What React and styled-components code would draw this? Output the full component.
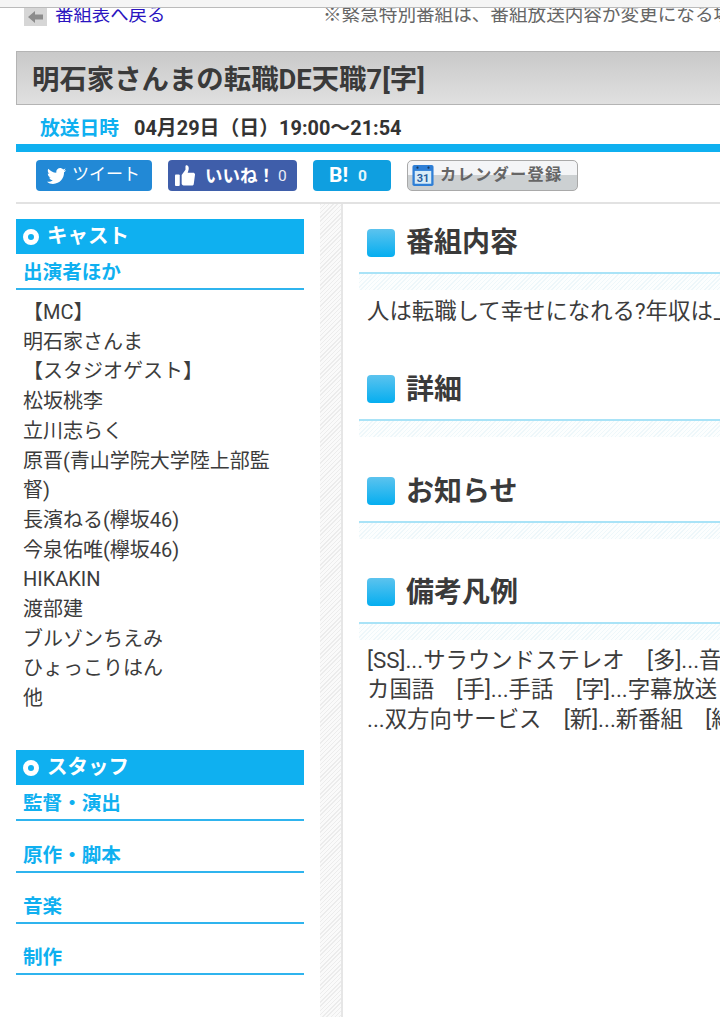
import React from "react";
import styled, { createGlobalStyle } from "styled-components";

const sky = "#0fb0f0";
const ink = "#333";

const Global = createGlobalStyle`
  html, body { margin: 0; padding: 0; background: #fff; }
  body { font-family: Roboto, "Noto Sans CJK JP", sans-serif; color: ${ink}; }
`;

const Page = styled.div`
  width: 720px;
  height: 1017px;
  overflow: hidden;
  position: relative;
`;

const Strip = styled.div`
  height: 7px;
  background: #f5f5f5;
  border-bottom: 1px solid #bbb;
  position: relative;
  z-index: 1;
`;

const NavRow = styled.div`
  display: flex;
  height: 43px;
  padding-left: 24px;
  white-space: nowrap;
  overflow: hidden;
`;

const BackIcon = styled.span`
  width: 23px;
  height: 18px;
  background: #d6d6d6;
  display: flex;
  align-items: center;
  justify-content: center;
  flex: none;
`;

const BackLink = styled.a`
  color: #2a14c0;
  font-size: 18.4px;
  line-height: 14px;
  margin-left: 8px;
  width: 268px;
  flex: none;
`;

const Notice = styled.span`
  color: #666;
  font-size: 18.6px;
  line-height: 14px;
`;

const TitleBox = styled.div`
  margin-left: 16px;
  width: 720px;
  height: 54px;
  border: 1px solid #b4b4b4;
  border-width: 1px 0 1px 1px;
  background: linear-gradient(#c9c9c9, #e0e0e0);
  display: flex;
  align-items: center;
  padding: 0 0 3px 15px;
  font-size: 27.4px;
  font-weight: 700;
  color: #3a3a3a;
  box-sizing: border-box;
`;

const DateRow = styled.div`
  display: flex;
  align-items: center;
  height: 39px;
  padding: 3px 0 0 40px;
  box-sizing: border-box;
  font-weight: 700;
`;

const DateLabel = styled.span`
  color: ${sky};
  font-size: 19.8px;
  width: 94px;
`;

const DateValue = styled.span`
  font-size: 19.9px;
`;

const BlueBar = styled.div`
  margin-left: 16px;
  height: 8px;
  background: ${sky};
`;

const Social = styled.div`
  display: flex;
  align-items: flex-start;
  height: 52px;
  margin-left: 16px;
  padding: 8px 0 0 20px;
  border-bottom: 2px solid #e2e2e2;
  box-sizing: border-box;
`;

const SocialBtn = styled.span`
  display: flex;
  align-items: center;
  height: 31px;
  width: ${p => p.$w}px;
  margin-right: 16px;
  padding-left: ${p => p.$pad}px;
  border-radius: 4px;
  background: ${p => p.$bg};
  color: #fff;
  box-sizing: border-box;
  flex: none;
`;

const BtnLabel = styled.span`
  font-weight: ${p => (p.$bold ? 700 : 400)};
  font-size: ${p => p.$size}px;
  margin-left: ${p => p.$ml || 0}px;
  padding-bottom: ${p => p.$lift || 0}px;
`;

const BtnCount = styled.span`
  font-size: 15.5px;
  font-weight: ${p => (p.$bold ? 700 : 400)};
  margin-left: ${p => p.$ml}px;
  opacity: .9;
`;

const CalendarBtn = styled.span`
  display: flex;
  align-items: center;
  width: 171px;
  height: 31px;
  padding-left: 4px;
  box-sizing: border-box;
  border: 1px solid #a9a9a9;
  border-radius: 5px;
  background: linear-gradient(#f4f5f7 0 50%, #ccd0d2 50% 100%);
  flex: none;
`;

const CalendarLabel = styled.span`
  margin-left: 6px;
  padding-bottom: 5px;
  color: #666;
  font-size: 16.3px;
  font-weight: 700;
  letter-spacing: 1.2px;
`;

const Columns = styled.div`
  display: flex;
  margin-left: 16px;
  height: 813px;
`;

const Sidebar = styled.aside`
  width: 288px;
  flex: none;
  padding-top: 15px;
`;

const Stripes = styled.div`
  width: 21px;
  flex: none;
  margin-left: 16px;
  background: repeating-linear-gradient(135deg, #ececec 0 1px, #fafafa 1px 3px);
  border-right: 2px solid #e6e6e6;
`;

const Main = styled.main`
  flex: 1;
  padding-top: 18px;
  margin-left: 16px;
  min-width: 0;
`;

const SideHead = styled.div`
  display: flex;
  align-items: center;
  height: 35px;
  background: ${sky};
  color: #fff;
  font-size: 20.5px;
  font-weight: 700;
  padding-left: 7px;
`;

const SideHeadText = styled.span`
  padding-bottom: 6px;
`;

const Ring = styled.span`
  width: 6px;
  height: 6px;
  border: 5px solid #fff;
  border-radius: 50%;
  margin-right: 8px;
  flex: none;
`;

const SideSub = styled.div`
  height: 36px;
  box-sizing: border-box;
  border-bottom: 2px solid #2fb4ee;
  color: ${sky};
  font-size: 19.6px;
  line-height: 38px;
  font-weight: 700;
  padding-left: 7px;
  margin-bottom: ${p => p.$after || 0}px;
`;

const CastList = styled.ul`
  list-style: none;
  margin: 8px 0 36.5px;
  padding: 0 30px 0 7px;
  font-size: 20px;
  line-height: 29.7px;
  color: #3c3c3c;
`;

const SectionHead = styled.div`
  display: flex;
  align-items: center;
  height: 52px;
  box-sizing: border-box;
  padding: 0 0 9px 8px;
  border-bottom: 2px solid #a9e3f7;
  font-size: 28px;
  font-weight: 700;
  color: #3a3a3a;
  width: 400px;
`;

const SectionText = styled.span`
  padding-bottom: 5px;
`;

const Square = styled.span`
  width: 28px;
  height: 28px;
  border-radius: 4px;
  background: linear-gradient(#5cc3ee, #05aef0);
  margin-right: 11px;
  flex: none;
`;

const Hatch = styled.div`
  width: 400px;
  height: 16px;
  background: repeating-linear-gradient(135deg, #eef7fa 0 1px, #fcfefe 1px 3px);
  margin-bottom: ${p => p.$after}px;
`;

const Para = styled.p`
  margin: ${p => p.$m};
  padding-left: 8px;
  width: 400px;
  font-size: 22.4px;
  line-height: 29.7px;
  white-space: nowrap;
  color: #3c3c3c;
`;

const cast = [
  "【MC】", "明石家さんま", "【スタジオゲスト】", "松坂桃李", "立川志らく",
  "原晋(青山学院大学陸上部監督)", "長濱ねる(欅坂46)", "今泉佑唯(欅坂46)", "HIKAKIN",
  "渡部建", "ブルゾンちえみ", "ひょっこりはん", "他",
];

const staff = ["監督・演出", "原作・脚本", "音楽", "制作"];

const Bird = () => (
  <svg width="19" height="16" viewBox="0 0 24 20" fill="#fff">
    <path d="M24 2.4c-.9.4-1.8.7-2.8.8 1-.6 1.8-1.6 2.2-2.7-1 .6-2 1-3.1 1.2C19.3.7 18 0 16.6 0c-2.7 0-4.9 2.2-4.9 4.9 0 .4 0 .8.1 1.1C7.7 5.8 4.1 3.9 1.7.9 1.2 1.6 1 2.5 1 3.4c0 1.7.9 3.2 2.2 4.1-.8 0-1.6-.2-2.2-.6v.1c0 2.4 1.7 4.4 3.9 4.8-.4.1-.8.2-1.3.2-.3 0-.6 0-.9-.1.6 2 2.4 3.4 4.6 3.4-1.7 1.3-3.8 2.1-6.1 2.1-.4 0-.8 0-1.2-.1C2.2 19.2 4.8 20 7.5 20c9.1 0 14-7.5 14-14v-.6c1-.7 1.8-1.6 2.5-3z" />
  </svg>
);

const Thumb = () => (
  <svg width="20" height="21" viewBox="0 0 21 22" fill="#fff">
    <rect x="0" y="10" width="5" height="12" rx="1" />
    <path d="M7 10.5 11 5V1.5C11 .5 12 0 13 .5c1.5.8 1.8 3 1 5.500l-.7 2H19c1.3 0 2.2 1 2 2.2l-1.3 9.600c-.2 1-1 1.700-2 1.700H9c-1.100 0-2-.9-2-2z" />
  </svg>
);

const BackArrow = () => (
  <svg width="15" height="12" viewBox="0 0 15 12" fill="#8c8c8c">
    <path d="M0 6 7 0v3.5h8v5H7V12z" />
  </svg>
);

const Calendar = () => (
  <svg width="22" height="23" viewBox="0 0 24 24">
    <rect x="0.5" y="0.5" width="23" height="23" rx="2" fill="#2f7fd6" />
    <rect x="3" y="7" width="18" height="14" fill="#d8ecf8" />
    <circle cx="6" cy="3.5" r="1.2" fill="#16375f" />
    <circle cx="18" cy="3.5" r="1.2" fill="#16375f" />
    <text x="12" y="19" textAnchor="middle" fontSize="12" fontWeight="700" fontFamily="Roboto" fill="#2a5f9e">31</text>
  </svg>
);

export default function App() {
  return (
    <Page>
      <Global />
      <Strip />
      <NavRow>
        <BackIcon><BackArrow /></BackIcon>
        <BackLink>番組表へ戻る</BackLink>
        <Notice>※緊急特別番組は、番組放送内容が変更になる場合があります</Notice>
      </NavRow>

      <TitleBox>明石家さんまの転職DE天職7[字]</TitleBox>

      <DateRow>
        <DateLabel>放送日時</DateLabel>
        <DateValue>04月29日（日）19:00～21:54</DateValue>
      </DateRow>
      <BlueBar />

      <Social>
        <SocialBtn $w={116} $pad={11} $bg="#2289d6">
          <Bird />
          <BtnLabel $ml={6} $size={17} $lift={6}>ツイート</BtnLabel>
        </SocialBtn>
        <SocialBtn $w={129} $pad={7} $bg="#3f5eaa">
          <Thumb />
          <BtnLabel $bold $ml={10} $size={17.5} $lift={2}>いいね！</BtnLabel>
          <BtnCount $ml={3}>0</BtnCount>
        </SocialBtn>
        <SocialBtn $w={78} $pad={16} $bg="#0f9fe0">
          <BtnLabel $bold $size={21} $lift={2}>B!</BtnLabel>
          <BtnCount $bold $ml={10}>0</BtnCount>
        </SocialBtn>
        <CalendarBtn>
          <Calendar />
          <CalendarLabel>カレンダー登録</CalendarLabel>
        </CalendarBtn>
      </Social>

      <Columns>
        <Sidebar>
          <SideHead><Ring /><SideHeadText>キャスト</SideHeadText></SideHead>
          <SideSub>出演者ほか</SideSub>
          <CastList>
            {cast.map(name => <li key={name}>{name}</li>)}
          </CastList>

          <SideHead><Ring /><SideHeadText>スタッフ</SideHeadText></SideHead>
          {staff.map(role => <SideSub key={role} $after={15.3}>{role}</SideSub>)}
        </Sidebar>

        <Stripes />

        <Main>
          <SectionHead><Square /><SectionText>番組内容</SectionText></SectionHead>
          <Hatch $after={0} />
          <Para $m="7px 0 42px">人は転職して幸せになれる?年収は上がるのか?転職のリアルに迫る</Para>

          <SectionHead><Square /><SectionText>詳細</SectionText></SectionHead>
          <Hatch $after={34} />

          <SectionHead><Square /><SectionText>お知らせ</SectionText></SectionHead>
          <Hatch $after={33} />

          <SectionHead><Square /><SectionText>備考凡例</SectionText></SectionHead>
          <Hatch $after={0} />
          <Para $m="6px 0 0">[SS]...サラウンドステレオ　[多]...音声多重放送　[二]...二か国語</Para>
          <Para $m="0">カ国語　[手]...手話　[字]...字幕放送　[デ]...データ放送</Para>
          <Para $m="0">...双方向サービス　[新]...新番組　[終]...最終回</Para>
        </Main>
      </Columns>
    </Page>
  );
}
